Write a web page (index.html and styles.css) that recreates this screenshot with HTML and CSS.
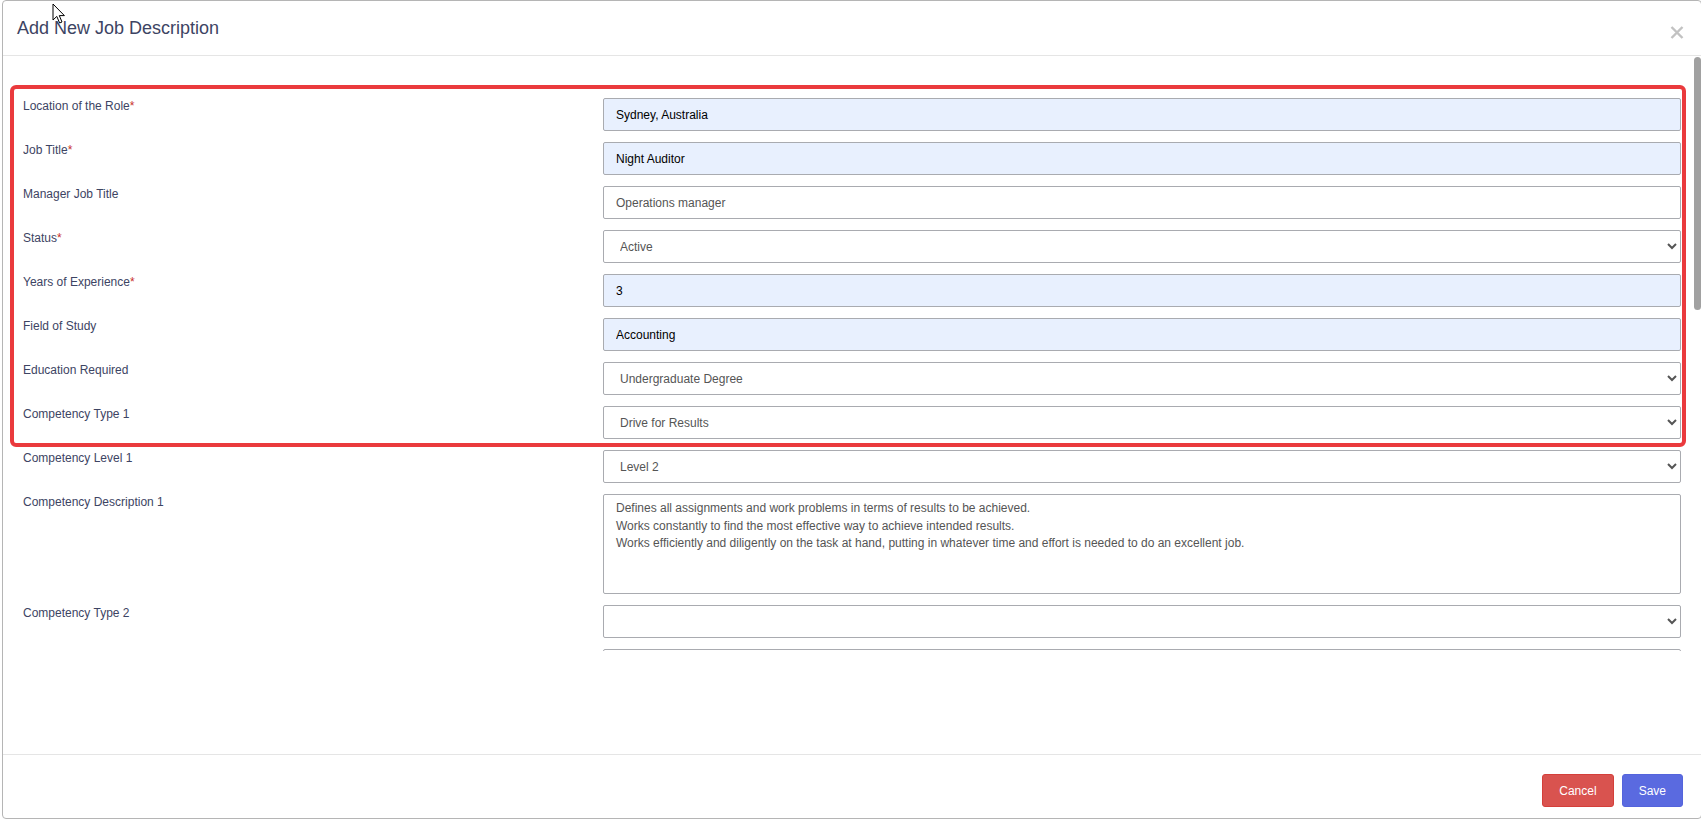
FILE: index.html
```html
<!DOCTYPE html>
<html lang="en">
<head>
  <meta charset="UTF-8" />
  <meta name="viewport" content="width=device-width, initial-scale=1.0"/>
  <title>Add New Job Description</title>
  <link rel="stylesheet" href="styles.css">
</head>
<body>
  <div class="modal">
    <div class="modal-header">
      <h4 class="modal-title">Add New Job Description</h4>
      <button class="close" type="button" aria-label="Close">
        <svg width="14" height="13" viewBox="0 0 14 13">
          <path d="M1.5 1 L12.5 12 M12.5 1 L1.5 12" stroke="#c2c2c2" stroke-width="2.4" fill="none"/>
        </svg>
      </button>
    </div>

    <div class="modal-body">
      <div class="body-inner">
        <form class="job-form">
          <label class="field-label">Location of the Role<span class="req">*</span></label>
          <input class="field filled" type="text" value="Sydney, Australia" />

          <label class="field-label">Job Title<span class="req">*</span></label>
          <input class="field filled" type="text" value="Night Auditor" />

          <label class="field-label">Manager Job Title</label>
          <input class="field" type="text" value="Operations manager" />

          <label class="field-label">Status<span class="req">*</span></label>
          <select class="field">
            <option>Active</option>
            <option>Inactive</option>
          </select>

          <label class="field-label">Years of Experience<span class="req">*</span></label>
          <input class="field filled" type="text" value="3" />

          <label class="field-label">Field of Study</label>
          <input class="field filled" type="text" value="Accounting" />

          <label class="field-label">Education Required</label>
          <select class="field">
            <option>Undergraduate Degree</option>
            <option>Postgraduate Degree</option>
          </select>

          <label class="field-label">Competency Type 1</label>
          <select class="field">
            <option>Drive for Results</option>
          </select>

          <label class="field-label">Competency Level 1</label>
          <select class="field">
            <option>Level 2</option>
          </select>

          <label class="field-label">Competency Description 1</label>
          <textarea class="field area">Defines all assignments and work problems in terms of results to be achieved.
Works constantly to find the most effective way to achieve intended results.
Works efficiently and diligently on the task at hand, putting in whatever time and effort is needed to do an excellent job.</textarea>

          <label class="field-label">Competency Type 2</label>
          <select class="field">
            <option></option>
          </select>

          <span class="field-label"></span>
          <input class="field" type="text" />
        </form>
      </div>
      <div class="scrollbar"><div class="thumb"></div></div>
    </div>

    <div class="modal-footer">
      <button class="btn btn-cancel" type="button">Cancel</button>
      <button class="btn btn-save" type="button">Save</button>
    </div>

    <div class="highlight"></div>

    <svg class="cursor" width="14" height="22" viewBox="0 0 14 22">
      <path d="M1 1 L1 17 L4.8 13.4 L7.6 20 L10 19 L7.3 12.6 L12.4 12.6 Z" fill="#fff" stroke="#000" stroke-width="1" stroke-linejoin="round"/>
    </svg>
  </div>
</body>
</html>
```

FILE: styles.css
```css
:root {
  --text: #3d4463;
  --muted: #555;
  --line: #e5e5e5;
  --input-border: #a9abb0;
  --autofill: #e8f0fe;
}

html, body {
  margin: 0;
  overflow: hidden;
  background: #fff;
}

body {
  font-family: "Liberation Sans", Arial, sans-serif;
  color: var(--text);
}

.modal {
  position: relative;
  margin-left: 2px;
  width: 1700px;
  height: 819px;
  box-sizing: border-box;
  border: 1px solid #b5b5b5;
  border-radius: 4px;
  background: #fff;
  display: flex;
  flex-direction: column;
  overflow: hidden;
}

.modal-header {
  height: 54px;
  flex: none;
  display: flex;
  align-items: flex-start;
  justify-content: space-between;
  padding: 0 17px 0 14px;
  border-bottom: 1px solid var(--line);
}

.modal-title {
  margin: 15px 0 0;
  font-size: 18px;
  font-weight: normal;
  line-height: 24px;
  color: var(--text);
}

.close {
  margin-top: 25px;
  padding: 0;
  border: none;
  background: none;
  line-height: 0;
  cursor: pointer;
}

.modal-body {
  height: 698px;
  flex: none;
  display: flex;
  overflow: hidden;
}

.body-inner {
  flex: 1;
  padding: 42px 13px 0 20px;
}

.scrollbar {
  width: 7px;
  flex: none;
  padding-top: 1px;
}

.scrollbar .thumb {
  height: 253px;
  background: #a1a1a1;
  border-radius: 4px;
}

.job-form {
  display: grid;
  grid-template-columns: 580px 1fr;
  row-gap: 11px;
  height: 553px;
  overflow: hidden;
}

.field-label {
  font-size: 12px;
  line-height: 17px;
  color: var(--text);
}

.req {
  color: #c9302c;
}

.field {
  height: 33px;
  box-sizing: border-box;
  margin: 0;
  padding: 0 12px;
  border: 1px solid var(--input-border);
  border-radius: 2px;
  background: #fff;
  font-family: "Liberation Sans", Arial, sans-serif;
  font-size: 12px;
  color: var(--muted);
  outline: none;
}

.field.filled {
  background: var(--autofill);
  color: #000;
}

.field.area {
  height: 100px;
  padding: 5px 12px;
  line-height: 17.5px;
  resize: none;
  overflow: hidden;
}

.modal-footer {
  flex: 1;
  display: flex;
  justify-content: flex-end;
  align-items: flex-start;
  gap: 8px;
  padding: 19px 18px 0 0;
  border-top: 1px solid var(--line);
}

.btn {
  height: 33px;
  padding: 0 16px;
  border-radius: 3px;
  font-family: "Liberation Sans", Arial, sans-serif;
  font-size: 12px;
  color: #fff;
  cursor: pointer;
}

.btn-cancel {
  background: #d9534f;
  border: 1px solid #d43f3a;
}

.btn-save {
  background: #5a6ae0;
  border: 1px solid #5464dc;
}

/* annotation drawn over the first fields */
.highlight {
  position: absolute;
  left: 7px;
  top: 84px;
  width: 1676px;
  height: 362px;
  box-sizing: border-box;
  border: 4px solid #ea3a3d;
  border-radius: 6px;
  pointer-events: none;
}

.cursor {
  position: absolute;
  left: 49px;
  top: 2px;
  pointer-events: none;
}
```
